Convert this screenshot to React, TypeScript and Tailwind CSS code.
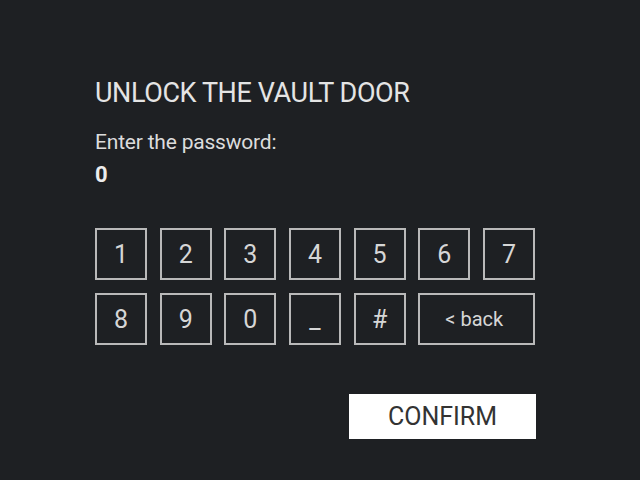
import React from 'react';

const row1 = ['1', '2', '3', '4', '5', '6', '7'];
const row2 = ['8', '9', '0', '_', '#'];

function Key({ label, wide }: { label: string; wide?: boolean }) {
  return (
    <button
      className={`${wide ? 'w-[117px] text-[20px] pr-[5px]' : 'w-[52px] text-[25px]'} h-[52px] border-2 border-[#b9b9b9] text-[#d6d6d6] flex items-center justify-center leading-none`}
    >
      {label}
    </button>
  );
}

export default function App() {
  return (
    <div
      className="w-[640px] h-[480px] bg-[#1e2023] overflow-hidden pl-[95px] pt-[76px]"
      style={{ fontFamily: 'Roboto, "Liberation Sans", sans-serif' }}
    >
      <h1 className="text-[27px] leading-[34px] text-[#e4e4e4] tracking-[-0.4px]">UNLOCK THE VAULT DOOR</h1>
      <p className="mt-[20px] text-[21px] leading-[24px] text-[#dcdcdc] tracking-[-0.2px]">Enter the password:</p>
      <p className="mt-[8px] text-[22px] leading-[26px] font-bold text-[#ececec]">0</p>

      <div className="mt-[40px] flex flex-col gap-[13px]">
        <div className="flex gap-[12.67px]">
          {row1.map((k) => (
            <Key key={k} label={k} />
          ))}
        </div>
        <div className="flex gap-[12.67px]">
          {row2.map((k) => (
            <Key key={k} label={k} />
          ))}
          <Key label="< back" wide />
        </div>
      </div>

      <div className="mt-[49px] flex pl-[254px]">
        <button className="w-[187px] h-[45px] bg-white text-[#333] text-[25px] leading-none flex items-center justify-center">
          CONFIRM
        </button>
      </div>
    </div>
  );
}
